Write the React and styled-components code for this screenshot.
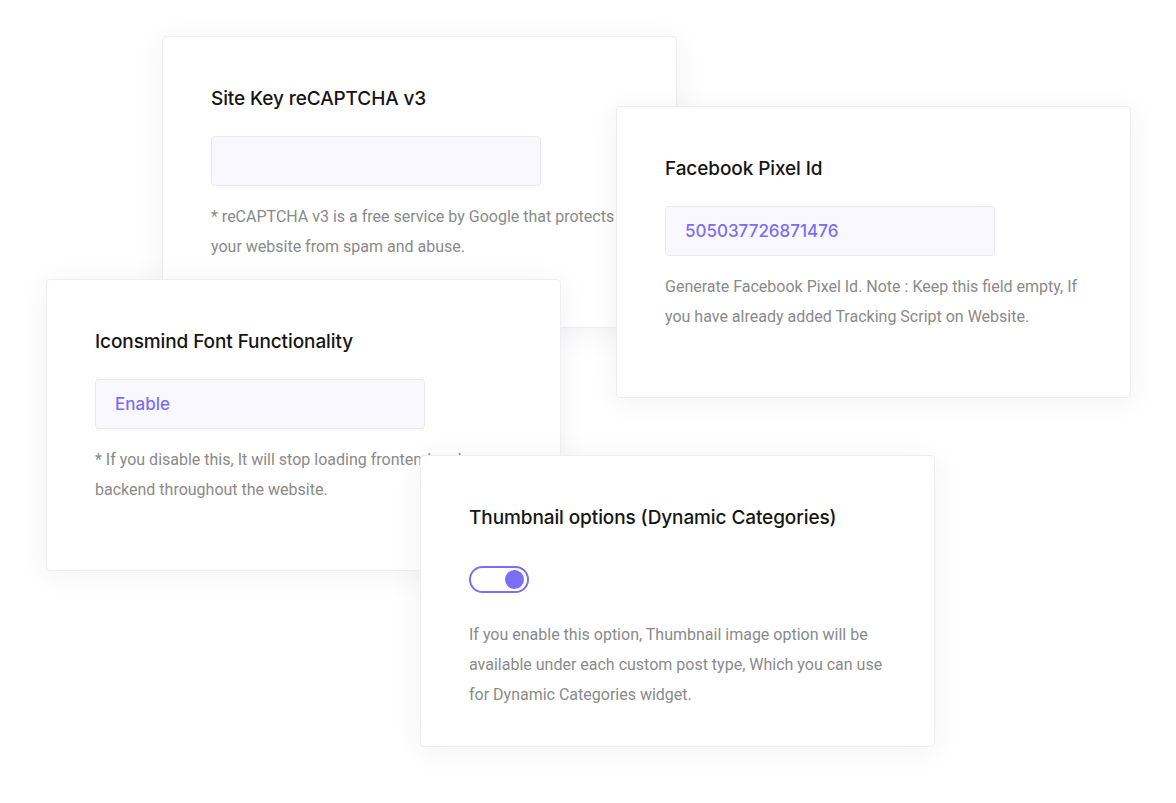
import React from "react";
import styled, { createGlobalStyle } from "styled-components";

const Global = createGlobalStyle`
  html, body { margin: 0; padding: 0; background: #ffffff; }
  body { font-family: Roboto, "Liberation Sans", sans-serif; }
  * { box-sizing: border-box; }
`;

const Canvas = styled.div`
  position: relative;
  width: 1176px;
  height: 803px;
  background: #ffffff;
  overflow: hidden;
`;

const Card = styled.section`
  position: absolute;
  left: ${(p) => p.$x}px;
  top: ${(p) => p.$y}px;
  z-index: ${(p) => p.$z};
  width: 515px;
  height: 292px;
  background: #ffffff;
  border: 1px solid #eeeef2;
  border-radius: 4px;
  box-shadow: 0 4px 30px rgba(30, 30, 60, 0.06);
  padding: 47px 48px 0 48px;
  display: flex;
  flex-direction: column;
`;

const Title = styled.h3`
  margin: 0;
  font-family: Inter, "Noto Sans", sans-serif;
  font-weight: 500;
  font-size: 19px;
  line-height: 30px;
  color: #151515;
  letter-spacing: -0.1px;
`;

const Field = styled.div`
  margin-top: 22px;
  width: 330px;
  height: 50px;
  background: #f9f8ff;
  border: 1px solid #e9e6fb;
  border-radius: 4px;
  padding: 0 19px;
  display: flex;
  align-items: center;
  font-family: Inter, "Noto Sans", sans-serif;
  font-weight: 500;
  font-size: 17px;
  color: #7b6ef4;
`;

const Toggle = styled.div`
  margin-top: 33px;
  width: 60px;
  height: 27px;
  border: 2px solid #7b6ef4;
  border-radius: 14px;
  background: #ffffff;
  display: flex;
  align-items: center;
  justify-content: flex-end;
  padding-right: 3px;
`;

const Knob = styled.span`
  width: 19px;
  height: 19px;
  border-radius: 50%;
  background: #7b6ef4;
`;

const Desc = styled.p`
  margin: ${(p) => p.$mt}px 0 0 0;
  font-family: Roboto, "Liberation Sans", sans-serif;
  font-size: 16px;
  line-height: 30px;
  color: #8a8a8a;
  width: 425px;
`;

export default function App() {
  return (
    <>
      <Global />
      <Canvas>
        <Card $x={162} $y={36} $z={1}>
          <Title>Site Key reCAPTCHA v3</Title>
          <Field />
          <Desc $mt={16}>
            * reCAPTCHA v3 is a free service by Google that protects your website from spam and abuse.
          </Desc>
        </Card>
        <Card $x={616} $y={106} $z={2}>
          <Title>Facebook Pixel Id</Title>
          <Field>505037726871476</Field>
          <Desc $mt={16}>
            Generate Facebook Pixel Id. Note : Keep this field empty, If you have already added Tracking Script on Website.
          </Desc>
        </Card>
        <Card $x={46} $y={279} $z={3}>
          <Title>Iconsmind Font Functionality</Title>
          <Field>Enable</Field>
          <Desc $mt={16}>
            * If you disable this, It will stop loading frontend and backend throughout the website.
          </Desc>
        </Card>
        <Card $x={420} $y={455} $z={4}>
          <Title>Thumbnail options (Dynamic Categories)</Title>
          <Toggle>
            <Knob />
          </Toggle>
          <Desc $mt={27}>
            If you enable this option, Thumbnail image option will be available under each custom post type, Which you can use for Dynamic Categories widget.
          </Desc>
        </Card>
      </Canvas>
    </>
  );
}
